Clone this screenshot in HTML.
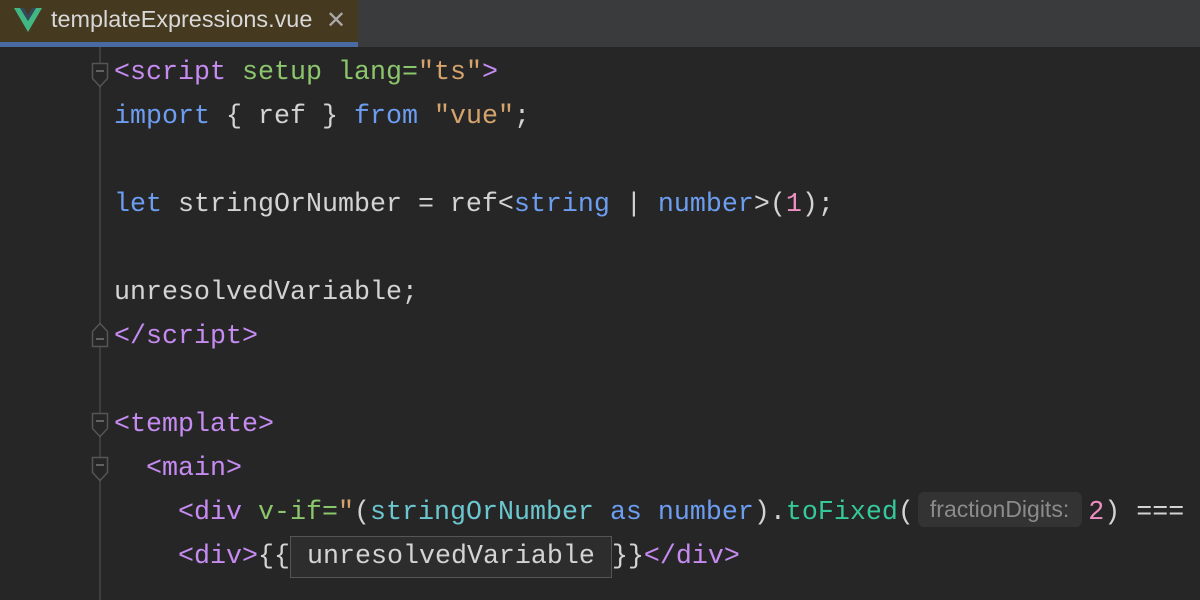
<!DOCTYPE html>
<html><head><meta charset="utf-8"><style>
body{margin:0;width:1200px;height:600px;overflow:hidden;background:#262626;font-family:"Liberation Mono",monospace;}
.tabbar{position:absolute;left:0;top:0;width:1200px;height:47px;background:#393b3d;}
.tab{position:absolute;left:0;top:0;width:358px;height:42px;background:#45391f;}
.uline{position:absolute;left:0;top:42px;width:358px;height:5px;background:#4a6aa3;}
.tabtxt{position:absolute;left:51px;top:6px;font-family:"Liberation Sans",sans-serif;font-size:23.4px;color:#d8d8d8;}
.x{position:absolute;left:326px;top:6px;font-family:"Liberation Sans",sans-serif;font-size:24px;color:#aaa;}
.gline{position:absolute;left:99px;top:47px;width:2px;height:553px;background:#3e3e3e;}
.line{position:absolute;left:114px;font-size:26.67px;white-space:pre;color:#d3d3d3;line-height:44px;height:44px;}
.t{color:#c68bf1}.a{color:#8cc66c}.s{color:#d5a46d}.k{color:#6c9df0}.n{color:#ee8fc2}.f{color:#35c99a}.v{color:#6bc6cf}
.hint{display:inline-block;font-family:"Liberation Sans",sans-serif;font-size:23px;color:#8b8b8b;background:#333;border-radius:6px;padding:0 13px 0 12px;line-height:35px;vertical-align:2px;margin:0 6px 0 4px;}
.box{display:inline-block;border:1px solid #555;background:#2d2d2d;line-height:40px;padding:0 0;vertical-align:0;}
.fold{position:absolute;left:91px;}
</style></head><body>
<div class="tabbar"><div class="tab"></div><div class="uline"></div>
<svg style="position:absolute;left:14px;top:8px" width="28" height="24" viewBox="0 0 28 24"><path d="M0 0h6l8 13 8-13h6L14 24z" fill="#41b883"/><path d="M6 0h4l4 7 4-7h4L14 13z" fill="#35495e"/></svg>
<div class="tabtxt">templateExpressions.vue</div><div class="x">✕</div></div>
<div class="gline"></div>
<svg class="fold" style="top:62px" width="18" height="28"><path d="M1.5 1.5h15v15l-7.5 8-7.5-8z" fill="#262626" stroke="#555" stroke-width="1.5"/><path d="M5 9h8" stroke="#777" stroke-width="1.5"/></svg>
<svg class="fold" style="top:320px" width="18" height="28"><path d="M1.5 26.5h15v-15l-7.5-8-7.5 8z" fill="#262626" stroke="#555" stroke-width="1.5"/><path d="M5 19h8" stroke="#777" stroke-width="1.5"/></svg>
<svg class="fold" style="top:412px" width="18" height="28"><path d="M1.5 1.5h15v15l-7.5 8-7.5-8z" fill="#262626" stroke="#555" stroke-width="1.5"/><path d="M5 9h8" stroke="#777" stroke-width="1.5"/></svg>
<svg class="fold" style="top:456px" width="18" height="28"><path d="M1.5 1.5h15v15l-7.5 8-7.5-8z" fill="#262626" stroke="#555" stroke-width="1.5"/><path d="M5 9h8" stroke="#777" stroke-width="1.5"/></svg>
<div class="line" style="top:51px"><span class="t">&lt;script</span> <span class="a">setup lang=</span><span class="s">"ts"</span><span class="t">&gt;</span></div>
<div class="line" style="top:95px"><span class="k">import</span> { ref } <span class="k">from</span> <span class="s">"vue"</span>;</div>
<div class="line" style="top:183px"><span class="k">let</span> stringOrNumber = ref&lt;<span class="k">string</span> | <span class="k">number</span>&gt;(<span class="n">1</span>);</div>
<div class="line" style="top:271px">unresolvedVariable;</div>
<div class="line" style="top:315px"><span class="t">&lt;/script&gt;</span></div>
<div class="line" style="top:403px"><span class="t">&lt;template&gt;</span></div>
<div class="line" style="top:447px">  <span class="t">&lt;main&gt;</span></div>
<div class="line" style="top:491px">    <span class="t">&lt;div</span> <span class="a">v-if=</span><span class="s">"</span>(<span class="v">stringOrNumber</span> <span class="k">as number</span>).<span class="f">toFixed</span>(<span class="hint">fractionDigits:</span><span class="n">2</span>) ===</div>
<div class="line" style="top:535px">    <span class="t">&lt;div&gt;</span>{{<span class="box"> unresolvedVariable </span>}}<span class="t">&lt;/div&gt;</span></div>
</body></html>
